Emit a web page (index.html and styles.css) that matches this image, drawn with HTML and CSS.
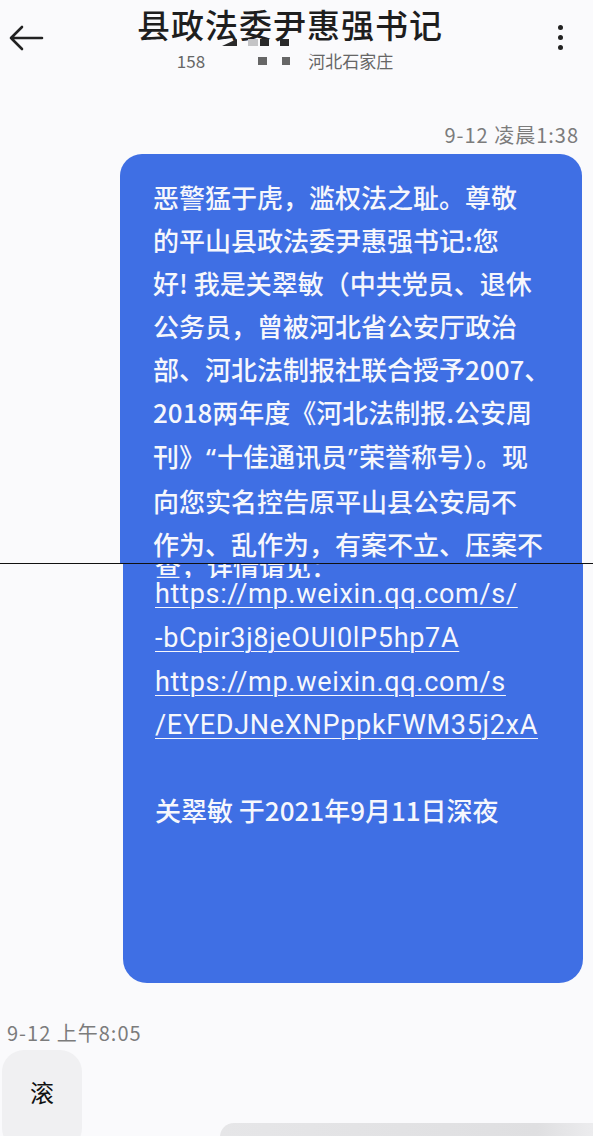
FILE: index.html
```html
<!DOCTYPE html>
<html>
<head>
    <title>县政法委尹惠强书记</title>
    <link rel="stylesheet" href="styles.css">
</head>
<body>
    <div class="screen">

        <!-- First capture: header and top of message -->
        <div class="shot shot-top">
            <div class="bar">
                <div class="back">
                    <svg width="36" height="26" viewBox="0 0 36 26">
                        <path d="M34 13H3M14 2L3 13l11 11" fill="none" stroke="#222" stroke-width="2.6" stroke-linecap="round" stroke-linejoin="round"/>
                    </svg>
                </div>
                <div class="contact">
                    <div class="contact-name">县政法委尹惠强书记</div>
                    <div class="contact-sub">
                        <span>158</span><span class="mark"></span><span class="mark second"></span><span>河北石家庄</span>
                    </div>
                    <div class="scribble">
                        <span class="tick tri"></span><span class="tick soft"></span><span class="tick"></span><span class="tick"></span>
                    </div>
                </div>
                <div class="menu">
                    <span class="dot"></span>
                    <span class="dot"></span>
                    <span class="dot"></span>
                </div>
            </div>

            <div class="time time-right">9-12 凌晨1:38</div>

            <div class="bubble bubble-out bubble-top">
                恶警猛于虎，滥权法之耻。尊敬<br>
                的平山县政法委尹惠强书记:您<br>
                好! 我是关翠敏（中共党员、退休<br>
                公务员，曾被河北省公安厅政治<br>
                部、河北法制报社联合授予2007、<br>
                2018两年度《河北法制报.公安周<br>
                刊》<span class="q">“</span>十佳通讯员<span class="q">”</span>荣誉称号）。现<br>
                向您实名控告原平山县公安局不<br>
                作为、乱作为，有案不立、压案不
            </div>
        </div>

        <div class="seam"></div>

        <!-- Second capture: end of message and reply -->
        <div class="shot shot-bottom">
            <div class="bubble bubble-out bubble-bottom">
                <div class="cut"><div class="cut-line">查，详情请见：</div></div>
                <div class="links">
                    <a href="#">https://mp.weixin.qq.com/s/<br>-bCpir3j8jeOUI0lP5hp7A</a><br>
                    <a href="#">https://mp.weixin.qq.com/s<br>/EYEDJNeXNPppkFWM35j2xA</a>
                </div>
                <div class="sign">关翠敏 于2021年9月11日深夜</div>
            </div>

            <div class="time time-left">9-12 上午8:05</div>

            <div class="reply-row">
                <div class="bubble-in">滚</div>
                <div class="input-bar"></div>
            </div>
        </div>
    </div>
</body>
</html>
```

FILE: styles.css
```css
/* Page */
body {
    margin: 0;
    padding: 0;
    background-color: #fafafc;
    font-family: "Noto Sans CJK SC", "Noto Sans", sans-serif;
    color: #222;
}

.screen {
    width: 593px;
    height: 1136px;
    overflow: hidden;
}

.shot {
    overflow: hidden;
}

.shot-top {
    height: 563px;
}

.seam {
    height: 1px;
    background-color: #111;
}

/* Header bar */
.bar {
    display: flex;
    align-items: flex-start;
    height: 96px;
}

.back {
    width: 36px;
    margin: 25px 0 0 8px;
}

.contact {
    flex: 1;
    position: relative;
    text-align: center;
    padding-top: 3px;
    margin-left: -22px;
}

.contact-name {
    font-size: 33px;
    line-height: 42px;
    font-weight: 500;
    color: #1e1e1e;
    letter-spacing: 1px;
}

.contact-sub {
    display: flex;
    justify-content: center;
    align-items: center;
    font-size: 17px;
    line-height: 24px;
    color: #666;
    margin-top: 4px;
    padding-right: 10px;
}

.contact-sub .mark {
    display: inline-block;
    width: 9px;
    height: 8px;
    background-color: #666;
    margin-left: 53px;
}

.contact-sub .mark.second {
    width: 8px;
    margin-left: 15px;
    margin-right: 18px;
}

/* redaction marks lying over the title */
.scribble {
    position: absolute;
    top: 39px;
    left: 200px;
    display: flex;
    align-items: flex-end;
}

.scribble .tick {
    width: 9px;
    height: 7px;
    background-color: #2a2a2a;
    margin-right: 11px;
}

.scribble .tick.tri {
    width: 15px;
    clip-path: polygon(100% 0, 100% 100%, 0 100%);
    margin-right: 11px;
}

.scribble .tick.soft {
    width: 10px;
    background-color: #c4c4c6;
    margin-right: 2px;
}

.menu {
    width: 6px;
    margin: 25px 29px 0 0;
    display: flex;
    flex-direction: column;
    gap: 5px;
}

.dot {
    width: 5px;
    height: 5px;
    border-radius: 50%;
    background-color: #222;
}

/* Timestamps */
.time {
    font-size: 20px;
    line-height: 24px;
    letter-spacing: 1px;
    color: #7c7c7c;
}

.time-right {
    text-align: right;
    margin-top: 27px;
    padding-right: 14px;
}

.time-left {
    margin-top: 38px;
    padding-left: 7px;
}

/* Message bubbles */
.bubble {
    background-color: #3f6fe4;
    color: #f6f7fc;
    font-size: 26px;
    font-weight: 500;
    line-height: 43.1px;
}

.bubble-top {
    margin: 7px 11px 0 120px;
    padding: 21px 20px 40px 33px;
    border-radius: 22px 22px 0 0;
    white-space: nowrap;
}

.bubble-top .q {
    font-family: "Noto Sans", sans-serif;
    margin: 0 1px;
}

.bubble-bottom {
    margin: 0 10px 0 123px;
    padding: 0 20px 152px 32px;
    border-radius: 0 0 24px 24px;
}

.cut {
    height: 14px;
    overflow: hidden;
}

.cut-line {
    margin-top: -20px;
}

.links {
    margin-top: -5px;
    font-family: Roboto, "Noto Sans", sans-serif;
    font-size: 27px;
    font-weight: 400;
    line-height: 43.8px;
    letter-spacing: 0.7px;
}

.links a {
    color: #f6f7fc;
    text-decoration: underline;
    text-decoration-thickness: 1px;
    text-underline-offset: 4px;
}

.sign {
    margin-top: 40px;
}

/* Reply */
.reply-row {
    display: flex;
    align-items: flex-start;
    margin-top: 5px;
}

.bubble-in {
    width: 80px;
    height: 100px;
    margin-left: 2px;
    background-color: #f0f0f2;
    border-radius: 22px;
    font-size: 24px;
    line-height: 24px;
    padding-top: 30px;
    text-align: center;
    color: #111;
    box-sizing: border-box;
}

.input-bar {
    flex: 1;
    height: 40px;
    margin: 73px 0 0 138px;
    border-radius: 14px 0 0 14px;
    background: linear-gradient(to right, #e6e6e8, #dfdfe1 85%, #ececee);
}
```
